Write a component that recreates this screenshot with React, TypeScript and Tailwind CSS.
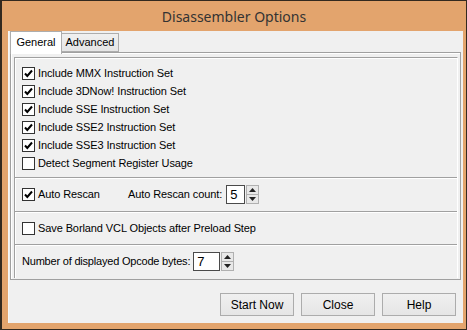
import React from "react";

const F = { fontFamily: '"Liberation Sans", Arial, sans-serif' };

function Check({ checked }: { checked?: boolean }) {
  return (
    <div className="w-[13px] h-[13px] border border-[#333333] bg-white flex items-center justify-center shrink-0">
      {checked && (
        <svg width="11" height="11" viewBox="0 0 11 11">
          <path d="M2 5.5 L4.3 8 L9 2.5" stroke="#000" strokeWidth="2" fill="none" />
        </svg>
      )}
    </div>
  );
}

function CheckRow({ checked, label }: { checked?: boolean; label: string }) {
  return (
    <div className="flex items-center h-[18px] gap-[3px]">
      <Check checked={checked} />
      <span className="text-[11px] text-black leading-none tracking-[-0.1px]" style={F}>{label}</span>
    </div>
  );
}

function Spin({ value, w }: { value: string; w: string }) {
  return (
    <div className="flex items-center gap-[1px]">
      <div className={`${w} h-[19px] bg-white border border-[#4a4a4a] flex items-center pl-[3px] text-[13px] text-black`} style={F}>
        {value}
      </div>
      <div className="flex flex-col w-[13px] h-[19px]">
        <div className="flex-1 border border-[#b0b0b0] bg-[#e8e8e8] flex items-center justify-center">
          <svg width="7" height="4" viewBox="0 0 7 4"><path d="M3.5 0 L7 4 L0 4 Z" fill="#222" /></svg>
        </div>
        <div className="flex-1 border border-t-0 border-[#b0b0b0] bg-[#e8e8e8] flex items-center justify-center">
          <svg width="7" height="4" viewBox="0 0 7 4"><path d="M0 0 L7 0 L3.5 4 Z" fill="#222" /></svg>
        </div>
      </div>
    </div>
  );
}

function Btn({ label }: { label: string }) {
  return (
    <div
      className="w-[74px] h-[23px] border border-[#acacac] bg-gradient-to-b from-[#f0f0f0] to-[#e5e5e5] flex items-center justify-center text-[12px] text-black"
      style={F}
    >
      {label}
    </div>
  );
}

export default function App() {
  return (
    <div className="w-[467px] h-[330px] bg-[#e3a46d] border border-[#33291f] border-l-2 flex flex-col">
      <div className="h-[30px] flex items-center justify-center text-[14px] text-[#333333]" style={{ fontFamily: '"Noto Sans", "Open Sans", sans-serif' }}>
        Disassembler Options
      </div>
      <div className="flex-1 flex pl-[6px] pr-[3px] pb-[6px]">
        <div className="flex-1 bg-[#f0f0f0] border-l border-[#f8f8f8] flex flex-col relative">
          {/* tabs */}
          <div className="flex items-end h-[23px] pl-[1px] pt-[2px] relative z-10">
            <div className="w-[52px] h-[23px] bg-white border border-b-0 border-[#adadad] flex items-center justify-center text-[11px] text-black pb-[1px]" style={F}>
              General
            </div>
            <div className="w-[57px] h-[19px] mb-[2px] bg-gradient-to-b from-[#f0f0f0] to-[#e5e5e5] border border-l-0 border-[#adadad] flex items-center justify-center text-[11px] text-black" style={F}>
              Advanced
            </div>
          </div>
          {/* page */}
          <div className="ml-[1px] mr-[2px] h-[228px] -mt-[2px] border border-[#a0a0a0] bg-[#f0f0f0] shadow-[inset_1px_1px_0_#ffffff] pt-[4px] pl-[3px] pr-[2px] flex flex-col">
            <div className="border-t border-l border-[#a0a0a0] shadow-[inset_1px_1px_0_#ffffff] border-r border-r-white flex flex-col">
              <div className="h-[119px] pl-[7px] pt-[6px] flex flex-col">
                <CheckRow checked label="Include MMX Instruction Set" />
                <CheckRow checked label="Include 3DNow! Instruction Set" />
                <CheckRow checked label="Include SSE Instruction Set" />
                <CheckRow checked label="Include SSE2 Instruction Set" />
                <CheckRow checked label="Include SSE3 Instruction Set" />
                <CheckRow label="Detect Segment Register Usage" />
              </div>
              <div className="h-[34px] border-t border-[#a0a0a0] shadow-[inset_0_1px_0_#ffffff] pl-[7px] flex items-center">
                <div className="w-[106px]">
                  <CheckRow checked label="Auto Rescan" />
                </div>
                <span className="text-[11px] text-black mr-[4px] tracking-[-0.1px]" style={F}>Auto Rescan count:</span>
                <Spin value="5" w="w-[19px]" />
              </div>
              <div className="h-[33px] border-t border-[#a0a0a0] shadow-[inset_0_1px_0_#ffffff] pl-[7px] flex items-center">
                <CheckRow label="Save Borland VCL Objects after Preload Step" />
              </div>
              <div className="h-[34px] border-t border-[#a0a0a0] shadow-[inset_0_1px_0_#ffffff] pl-[7px] flex items-center">
                <span className="text-[11px] text-black mr-[3px] tracking-[-0.2px]" style={F}>Number of displayed Opcode bytes:</span>
                <Spin value="7" w="w-[27px]" />
              </div>
            </div>
          </div>
          {/* buttons */}
          <div className="flex justify-end gap-[7px] pr-[7px] mt-[13px]">
            <Btn label="Start Now" />
            <Btn label="Close" />
            <Btn label="Help" />
          </div>
        </div>
      </div>
    </div>
  );
}
